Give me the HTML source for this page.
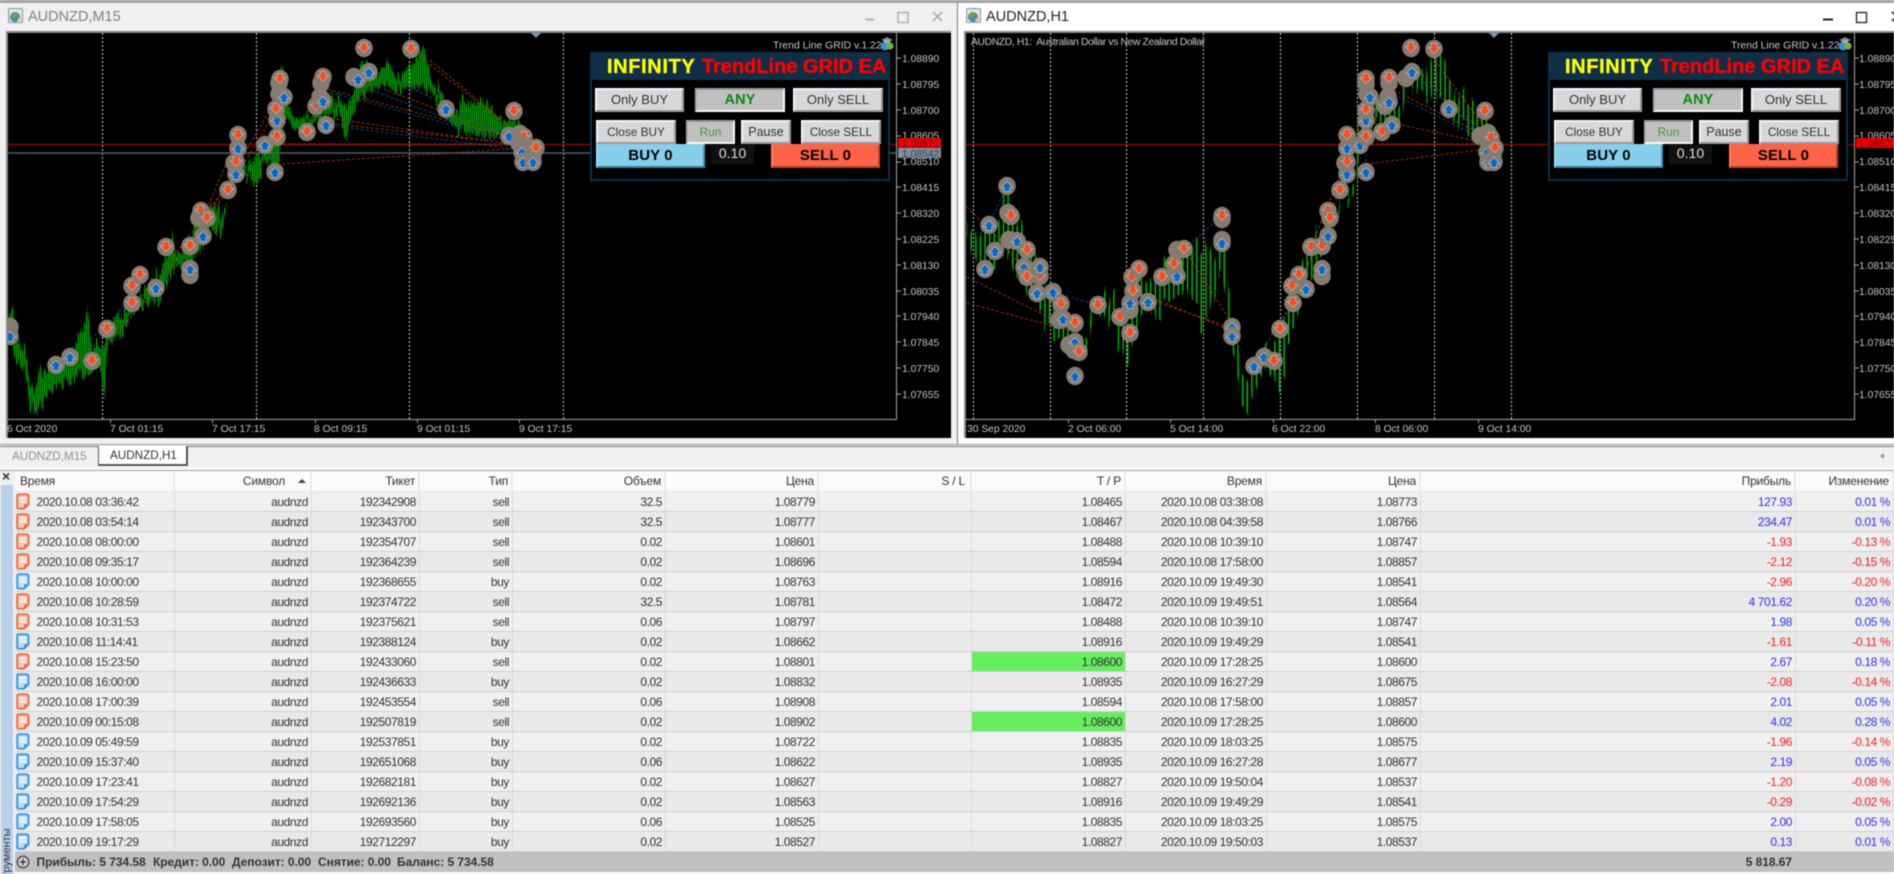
<!DOCTYPE html>
<html><head><meta charset="utf-8"><title>AUDNZD</title>
<style>
html,body{margin:0;padding:0;width:1894px;height:874px;overflow:hidden;background:#f0f0f0;font-family:"Liberation Sans",sans-serif}
#w{position:absolute;left:0;top:0;width:1894px;height:874px;overflow:hidden;background:#f0f0f0;filter:blur(.4px)}
.abs,.b,.p{position:absolute}
svg text{font-family:"Liberation Sans",sans-serif}
.p{top:52px;width:300px;height:129px;background:#0f2f47}
.in{position:absolute;left:2px;top:28px;width:296px;height:99px;background:#000}
.ti{position:absolute;left:17px;top:3px;font-weight:bold;font-size:20px;white-space:nowrap;line-height:24px;-webkit-text-stroke:.35px}
.ti .y{color:#ff0;letter-spacing:.62px}
.ti .r{color:#f00;margin-left:1px}
.b{box-sizing:border-box;text-align:center;background:#d8d8d8;color:#333;border:2px solid;border-color:#f4f4f4 #999 #999 #f4f4f4;white-space:nowrap;line-height:20px;font-size:13px}
.b.s{font-size:11.8px}
.b.d{background:#c0c0c0;border-color:#999 #f8f8f8 #f8f8f8 #aaa}
.big{font-weight:bold;font-size:15px;color:#000;letter-spacing:.1px}
table{position:absolute;left:15px;top:471px;width:1879px;table-layout:fixed;border-collapse:separate;border-spacing:0;font-size:12px;letter-spacing:-.42px;color:#333}
td,th{box-sizing:border-box;height:20px;padding:0 3px 0 0;text-align:right;border-right:1px solid #d8d8d8;border-bottom:1px solid #cfcfcf;white-space:nowrap;overflow:hidden;font-weight:normal;line-height:18px;position:relative}
th{height:21px;background:#fbfbfb;border-right:2px solid #ececec;border-bottom:1px solid #e4e4e4;letter-spacing:-.2px}
tr:nth-child(even) td{background:#e9e9e9}
td.a{text-align:left;padding-left:21.5px}
td.g{background:#66ee5f!important}
td svg{position:absolute;left:1px;top:1px;width:14px;height:17px}
.u{color:#3030f5}.n{color:#f52020}
.ft{position:absolute;top:852px;font-size:12px;font-weight:bold;color:#333;line-height:20px;white-space:nowrap;letter-spacing:-.05px}
</style></head><body><div id="w">

<!-- window chrome -->
<div class="abs" style="left:0;top:0;width:1894px;height:3px;background:#a2a2a2"></div>
<div class="abs" style="left:0;top:3px;width:957px;height:441px;background:#f0f0f0"></div>
<div class="abs" style="left:957px;top:3px;width:1px;height:441px;background:#777"></div>
<div class="abs" style="left:958px;top:3px;width:936px;height:441px;background:#fff"></div>
<div class="abs" style="left:28px;top:6px;font-size:14.5px;line-height:22px;color:#808080">AUDNZD,M15</div>
<div class="abs" style="left:986px;top:6px;font-size:14.5px;line-height:22px;color:#222">AUDNZD,H1</div>

<!-- black chart areas -->
<div class="abs" style="left:6px;top:31px;width:945px;height:407px;background:#000;border:solid #8a8a8a;border-width:2px 0 0 2px;box-sizing:border-box"></div>
<div class="abs" style="left:964px;top:31px;width:930px;height:407px;background:#000;border:solid #8a8a8a;border-width:2px 0 0 2px;box-sizing:border-box"></div>

<svg class="abs" style="left:0;top:0" width="1894" height="874" viewBox="0 0 1894 874">
<defs>
<pattern id="p1" width="2" height="10" patternUnits="userSpaceOnUse"><rect width="1.3" height="10" fill="#00b000"/></pattern>
<pattern id="p2" width="4.6" height="10" patternUnits="userSpaceOnUse"><rect width="1.4" height="10" fill="#00c400"/></pattern>
<filter id="j1" x="0" y="30" width="900" height="400" filterUnits="userSpaceOnUse" color-interpolation-filters="sRGB"><feTurbulence type="fractalNoise" baseFrequency="0.45 0.0005" numOctaves="2" seed="3" result="n"/><feColorMatrix in="n" type="matrix" values="0 0 0 0 .5  0 1.8 0 0 -.4  0 0 0 0 0  0 0 0 0 1" result="m"/><feDisplacementMap in="SourceGraphic" in2="m" scale="20" xChannelSelector="R" yChannelSelector="G"/></filter>
<filter id="j2" x="960" y="30" width="900" height="400" filterUnits="userSpaceOnUse" color-interpolation-filters="sRGB"><feTurbulence type="fractalNoise" baseFrequency="0.3 0.0005" numOctaves="2" seed="8" result="n"/><feColorMatrix in="n" type="matrix" values="0 0 0 0 .5  0 1.8 0 0 -.4  0 0 0 0 0  0 0 0 0 1" result="m"/><feDisplacementMap in="SourceGraphic" in2="m" scale="30" xChannelSelector="R" yChannelSelector="G"/></filter>
<clipPath id="c1"><rect x="8" y="33" width="888" height="386"/></clipPath>
<clipPath id="c2"><rect x="966" y="33" width="888" height="386"/></clipPath>
<g id="D"><ellipse rx="8.8" ry="9.2" fill="#867b71"/><path d="M-2.8-5.4H2.8V-1.5H5.8L0 4.6-5.800-1.500H-2.800Z" fill="#f24c22" stroke="#d9c4b8" stroke-width=".6"/></g>
<g id="U"><ellipse rx="8.8" ry="9.2" fill="#867b71"/><path d="M-2.8 5.4H2.8V1.500H5.800L0-4.600-5.800 1.500H-2.800Z" fill="#0a68c4" stroke="#c8d4de" stroke-width=".6"/></g>
<g id="G"><ellipse rx="8.8" ry="9.2" fill="#867b71"/></g>
<g id="ic"><rect x=".5" y=".5" width="14" height="14" rx="1" fill="#dfe6e8" stroke="#8a9498"/><circle cx="7" cy="9" r="5" fill="#3d86c6"/><path d="M3 7l4-3 3 2-2 3-3 3z" fill="#6aa83c"/><path d="M9 11l3-2 1 3-3 1z" fill="#e0c040"/></g>
<g id="hat"><circle cx="6" cy="11" r="4.5" fill="#3d8ed0"/><circle cx="11" cy="11" r="3.6" fill="#6fb83c"/><path d="M2 5L8 2l6 3-6 3z" fill="#7a8a90"/><rect x="5" y="5" width="6" height="3" fill="#a8b0b4"/></g>
<symbol id="rd" viewBox="0 0 14 17"><path d="M1.200 2.500a1.200 1.200 0 0 1 1.200-1.200h8.400a1.700 1.700 0 0 1 1.700 1.700v8.500L8 15.700H2.400a1.200 1.200 0 0 1-1.200-1.200z" fill="#fbc9b8" stroke="#ee6a44" stroke-width="1.900"/><path d="M3.500 5.200h6.500M3.500 8.400h6.500" stroke="#fff" stroke-width="1.400"/><path d="M8 15.700v-4.500h4.500z" fill="#ee6a44"/></symbol>
<symbol id="bl" viewBox="0 0 14 17"><path d="M1.200 2.500a1.200 1.200 0 0 1 1.200-1.200h8.400a1.700 1.700 0 0 1 1.700 1.700v8.500L8 15.700H2.400a1.200 1.200 0 0 1-1.200-1.200z" fill="#bfe0f8" stroke="#3b96de" stroke-width="1.900"/><path d="M3.500 5.200h6.500M3.500 8.400h6.500" stroke="#fff" stroke-width="1.400"/><path d="M8 15.700v-4.500h4.500z" fill="#3b96de"/></symbol>
</defs>

<!-- title icons / window controls -->
<use href="#ic" x="8" y="8"/><use href="#ic" x="966" y="8"/>
<path d="M865 19.500h9" stroke="#b0b0b0" stroke-width="2"/><rect x="898" y="12.500" width="10" height="10" fill="none" stroke="#b0b0b0" stroke-width="1.500"/><path d="M933 12l9 9M942 12l-9 9" stroke="#b0b0b0" stroke-width="1.800"/>
<path d="M1823 19.500h10" stroke="#222" stroke-width="2"/><rect x="1856.500" y="12.500" width="10" height="10" fill="none" stroke="#222" stroke-width="1.300"/><path d="M1892 12l9 9M1901 12l-9 9" stroke="#222" stroke-width="1.800"/>

<!-- CHART 1 -->
<g clip-path="url(#c1)">
<path d="M102.500 33V419M256.500 33V419M409.500 33V419M563.500 33V419" stroke="#d4d4d4" stroke-dasharray="2 2"/>
<polygon fill="url(#p1)" filter="url(#j1)" points="8,316 13,306 17,340 25,352 28,375 33,395 40,372 50,375 60,365 70,355 80,338 88,308 92,350 103,345 110,325 125,312 140,298 150,282 163,270 172,233 176,255 190,240 200,215 215,205 222,215 228,195 240,160 250,165 255,155 265,155 275,130 282,61 287,105 295,118 310,118 325,95 333,98 345,105 352,100 358,70 365,60 375,78 388,62 398,80 410,65 425,48 432,85 440,90 455,115 462,100 475,105 480,100 490,105 500,120 518,120 530,140 530,150 515,140 500,135 478,135 475,135 455,128 440,105 430,90 412,85 398,92 385,85 370,90 358,100 345,140 340,115 325,115 310,125 295,130 285,115 278,170 265,160 258,185 245,172 232,165 222,232 210,230 195,260 175,265 160,300 150,302 135,310 118,340 108,345 104,397 100,365 90,372 70,380 60,385 45,400 38,412 30,410 24,370 16,360 8,330"/>
<path d="M8 144.500H896" stroke="#8b0000" stroke-width="1.500"/><path d="M8 153H896" stroke="#4c5c68" stroke-width="1.500"/>
<g fill="none" stroke-width="1" stroke-dasharray="3 2" opacity=".85">
<path stroke="#b03818" d="M282 164L525 148M283 144L525 144M360 80L525 143M323 88L525 141M430 60L525 140M326 123L525 145M307 115L525 146M107 345L190 250L238 135M168 272L228 190L277 109M140 300L236 174M197 235L270 110M418 55L500 120"/>
<path stroke="#1050a0" d="M380 72L525 145M330 92L525 145M358 85L525 148M60 365L107 325L140 290M156 288L203 236M326 125L525 150M446 105L525 145"/>
</g>
<g>
<use href="#G" x="10" y="327"/><use href="#U" x="10" y="336"/><use href="#U" x="56" y="365"/><use href="#U" x="70" y="357"/><use href="#D" x="92" y="361"/><use href="#D" x="107" y="329"/><use href="#D" x="132" y="303"/><use href="#D" x="132" y="286"/><use href="#D" x="140" y="275"/><use href="#U" x="156" y="288"/><use href="#D" x="166" y="247"/><use href="#G" x="190" y="275"/><use href="#U" x="190" y="269"/><use href="#D" x="190" y="246"/><use href="#U" x="203" y="236"/><use href="#G" x="199" y="218"/><use href="#D" x="201" y="211"/><use href="#D" x="207" y="218"/><use href="#D" x="228" y="190"/><use href="#U" x="236" y="174"/><use href="#G" x="234" y="163"/><use href="#D" x="236" y="162"/><use href="#U" x="238" y="148"/><use href="#D" x="238" y="135"/><use href="#U" x="265" y="145"/><use href="#U" x="277" y="120"/><use href="#D" x="277" y="137"/><use href="#D" x="276" y="109"/><use href="#U" x="275" y="172"/><use href="#G" x="279" y="94"/><use href="#U" x="284" y="97"/><use href="#G" x="279" y="83"/><use href="#D" x="280" y="79"/><use href="#D" x="307" y="132"/><use href="#U" x="326" y="125"/><use href="#D" x="316" y="106"/><use href="#G" x="320" y="97"/><use href="#U" x="323" y="101"/><use href="#G" x="321" y="83"/><use href="#D" x="323" y="77"/><use href="#G" x="354" y="77"/><use href="#U" x="358" y="79"/><use href="#U" x="369" y="72"/><use href="#D" x="364" y="48"/><use href="#D" x="411" y="49"/><use href="#U" x="446" y="109"/><use href="#D" x="514" y="111"/><use href="#U" x="509" y="136"/><use href="#G" x="520" y="134"/><use href="#D" x="524" y="137"/><use href="#G" x="519" y="143"/><use href="#U" x="522" y="152"/><use href="#G" x="533" y="155"/><use href="#D" x="536" y="148"/><use href="#U" x="523" y="162"/><use href="#U" x="533" y="162"/>
</g>
<path d="M531 33h10l-5 5z" fill="#7a96aa"/>
</g>
<path d="M896.500 33V419.500H8" fill="none" stroke="#a8a8a8"/>
<path d="M896 58h5M896 84h5M896 110h5M896 136h5M896 162h5M896 187h5M896 213h5M896 239h5M896 265h5M896 291h5M896 316h5M896 342h5M896 368h5M896 394h5M110.500 419v4M212.500 419v4M315.500 419v4M417.500 419v4M519.500 419v4" stroke="#a8a8a8" fill="none"/>
<g fill="#c4c4c4" font-size="10.300">
<text x="902" y="62">1.08890</text><text x="902" y="88">1.08795</text><text x="902" y="114">1.08700</text><text x="902" y="139">1.08605</text><text x="902" y="165">1.08510</text><text x="902" y="191">1.08415</text><text x="902" y="217">1.08320</text><text x="902" y="243">1.08225</text><text x="902" y="269">1.08130</text><text x="902" y="295">1.08035</text><text x="902" y="320">1.07940</text><text x="902" y="346">1.07845</text><text x="902" y="372">1.07750</text><text x="902" y="398">1.07655</text>
<text x="7" y="432">6 Oct 2020</text><text x="110" y="432">7 Oct 01:15</text><text x="212" y="432">7 Oct 17:15</text><text x="314" y="432">8 Oct 09:15</text><text x="417" y="432">9 Oct 01:15</text><text x="519" y="432">9 Oct 17:15</text>
</g>
<rect x="898" y="138" width="43" height="10" fill="#f00000"/><rect x="898" y="148" width="43" height="10" fill="#7e909c"/>
<text x="902" y="147" font-size="10.300" fill="#700000">1.08572</text><text x="902" y="157" font-size="10.300" fill="#33424d">1.08542</text>
<text x="773" y="48.500" font-size="10.400" fill="#c8c8c8">Trend Line GRID v.1.22</text><use href="#hat" x="879" y="35"/>

<!-- CHART 2 -->
<g clip-path="url(#c2)">
<path d="M973.500 33V419M1050.500 33V419M1126.500 33V419M1203.500 33V419M1280.500 33V419M1357.500 33V419M1434.500 33V419M1511.500 33V419" stroke="#d4d4d4" stroke-dasharray="2 2"/>
<polygon fill="url(#p2)" filter="url(#j2)" points="967,225 975,235 985,225 1000,220 1005,173 1012,205 1020,225 1035,255 1050,290 1062,305 1075,340 1088,330 1098,300 1105,290 1120,310 1130,320 1140,280 1150,285 1160,275 1175,255 1190,245 1203,240 1215,250 1225,250 1230,300 1237,350 1242,380 1252,375 1262,355 1275,340 1285,310 1295,295 1312,230 1325,225 1335,205 1355,180 1358,130 1368,100 1370,62 1378,110 1400,105 1405,70 1420,75 1435,55 1445,60 1452,90 1470,98 1490,120 1495,135 1495,145 1475,135 1450,115 1440,100 1425,95 1408,85 1400,125 1390,130 1375,120 1360,150 1357,190 1340,205 1330,235 1312,270 1300,300 1290,340 1280,395 1272,370 1262,380 1248,410 1240,412 1235,360 1228,320 1222,270 1203,325 1190,290 1170,300 1158,325 1145,310 1127,360 1110,320 1095,310 1090,345 1078,355 1060,345 1040,310 1020,275 1005,255 990,260 975,260 967,240"/>
<path d="M966 144.500H1854" stroke="#8b0000" stroke-width="1.500"/>
<g fill="none" stroke-width="1" stroke-dasharray="3 2" opacity=".85">
<path stroke="#b03818" d="M967 207L1000 240L1040 290L1075 325M967 277L1075 330M967 303L1075 332M1366 164L1495 148M1366 144L1495 144M1411 65L1495 143M1389 88L1495 141M1434 60L1495 140M1392 123L1495 145M1139 269L1120 317M1184 249L1230 320M1133 290L1230 330M1222 216L1222 243M1150 300L1232 328M1280 329L1340 190M1311 247L1366 110"/>
<path stroke="#1050a0" d="M1412 72L1495 145M1389 92L1495 145M1053 292L1075 340M1017 241L1040 267M1007 186L989 225M1254 366L1280 320L1293 303M1184 249L1222 216M1098 305L1053 292M1366 79L1366 172M1449 105L1495 145"/>
</g>
<g>
<use href="#U" x="1007" y="186"/><use href="#U" x="989" y="225"/><use href="#U" x="995" y="251"/><use href="#U" x="985" y="269"/><use href="#G" x="1008" y="213"/><use href="#D" x="1011" y="216"/><use href="#G" x="1009" y="240"/><use href="#U" x="1017" y="241"/><use href="#D" x="1027" y="250"/><use href="#U" x="1024" y="267"/><use href="#D" x="1040" y="276"/><use href="#U" x="1040" y="267"/><use href="#D" x="1027" y="277"/><use href="#U" x="1037" y="293"/><use href="#U" x="1053" y="292"/><use href="#G" x="1059" y="320"/><use href="#D" x="1061" y="304"/><use href="#U" x="1063" y="319"/><use href="#D" x="1075" y="323"/><use href="#G" x="1069" y="345"/><use href="#G" x="1074" y="350"/><use href="#U" x="1075" y="342"/><use href="#D" x="1079" y="352"/><use href="#U" x="1075" y="376"/><use href="#D" x="1098" y="305"/><use href="#D" x="1120" y="317"/><use href="#D" x="1130" y="333"/><use href="#G" x="1130" y="310"/><use href="#U" x="1130" y="303"/><use href="#D" x="1133" y="291"/><use href="#D" x="1132" y="277"/><use href="#D" x="1139" y="269"/><use href="#U" x="1148" y="302"/><use href="#D" x="1162" y="277"/><use href="#U" x="1177" y="276"/><use href="#D" x="1174" y="264"/><use href="#G" x="1177" y="250"/><use href="#D" x="1184" y="249"/><use href="#G" x="1222" y="219"/><use href="#D" x="1222" y="216"/><use href="#G" x="1222" y="240"/><use href="#U" x="1222" y="243"/><use href="#U" x="1232" y="327"/><use href="#U" x="1232" y="336"/><use href="#U" x="1254" y="366"/><use href="#U" x="1264" y="357"/><use href="#D" x="1274" y="361"/><use href="#D" x="1280" y="329"/><use href="#D" x="1293" y="303"/><use href="#D" x="1292" y="286"/><use href="#D" x="1299" y="275"/><use href="#U" x="1306" y="289"/><use href="#D" x="1311" y="247"/><use href="#G" x="1322" y="276"/><use href="#U" x="1322" y="269"/><use href="#D" x="1322" y="246"/><use href="#U" x="1328" y="236"/><use href="#D" x="1328" y="211"/><use href="#D" x="1330" y="218"/><use href="#D" x="1340" y="190"/><use href="#U" x="1347" y="174"/><use href="#G" x="1345" y="163"/><use href="#D" x="1347" y="162"/><use href="#U" x="1347" y="148"/><use href="#D" x="1347" y="135"/><use href="#U" x="1360" y="145"/><use href="#U" x="1366" y="120"/><use href="#D" x="1366" y="137"/><use href="#D" x="1366" y="110"/><use href="#U" x="1366" y="172"/><use href="#G" x="1367" y="94"/><use href="#U" x="1370" y="97"/><use href="#G" x="1366" y="84"/><use href="#D" x="1366" y="79"/><use href="#D" x="1382" y="132"/><use href="#U" x="1392" y="125"/><use href="#D" x="1385" y="106"/><use href="#G" x="1388" y="97"/><use href="#U" x="1389" y="102"/><use href="#G" x="1389" y="83"/><use href="#D" x="1389" y="78"/><use href="#G" x="1406" y="78"/><use href="#U" x="1412" y="72"/><use href="#D" x="1411" y="48"/><use href="#D" x="1434" y="49"/><use href="#U" x="1449" y="109"/><use href="#D" x="1485" y="111"/><use href="#G" x="1480" y="136"/><use href="#G" x="1488" y="133"/><use href="#D" x="1491" y="138"/><use href="#G" x="1493" y="155"/><use href="#U" x="1487" y="152"/><use href="#D" x="1495" y="148"/><use href="#U" x="1488" y="162"/><use href="#U" x="1494" y="162"/>
</g>
<path d="M1489 33h10l-5 5z" fill="#7a96aa"/>
</g>
<path d="M1854.500 33V419.500H966" fill="none" stroke="#a8a8a8"/>
<path d="M1854 58h5M1854 84h5M1854 110h5M1854 136h5M1854 162h5M1854 187h5M1854 213h5M1854 239h5M1854 265h5M1854 291h5M1854 316h5M1854 342h5M1854 368h5M1854 394h5M1068.500 419v4M1170.500 419v4M1273.500 419v4M1375.500 419v4M1478.500 419v4" stroke="#a8a8a8" fill="none"/>
<g fill="#c4c4c4" font-size="10.300">
<text x="1859" y="62">1.08890</text><text x="1859" y="88">1.08795</text><text x="1859" y="114">1.08700</text><text x="1859" y="139">1.08605</text><text x="1859" y="165">1.08510</text><text x="1859" y="191">1.08415</text><text x="1859" y="217">1.08320</text><text x="1859" y="243">1.08225</text><text x="1859" y="269">1.08130</text><text x="1859" y="295">1.08035</text><text x="1859" y="320">1.07940</text><text x="1859" y="346">1.07845</text><text x="1859" y="372">1.07750</text><text x="1859" y="398">1.07655</text>
<text x="967" y="432">30 Sep 2020</text><text x="1068" y="432">2 Oct 06:00</text><text x="1170" y="432">5 Oct 14:00</text><text x="1272" y="432">6 Oct 22:00</text><text x="1375" y="432">8 Oct 06:00</text><text x="1478" y="432">9 Oct 14:00</text>
</g>
<rect x="1856" y="138" width="38" height="10" fill="#f00000"/><text x="1859" y="147" font-size="10.300" fill="#700000">1.08572</text>
<text x="971" y="45" font-size="10.300" letter-spacing="-.35" fill="#c8c8c8" xml:space="preserve">AUDNZD, H1:  Australian Dollar vs New Zealand Dollar</text>
<text x="1731" y="48.500" font-size="10.400" fill="#c8c8c8">Trend Line GRID v.1.22</text><use href="#hat" x="1837" y="35"/>
</svg>

<!-- EA panel 1 -->
<div class="p" style="left:590px">
<div class="in"></div>
<div class="ti"><span class="y">INFINITY</span> <span class="r">TrendLine GRID EA</span></div>
<div class="b" style="left:5px;top:36px;width:89px;height:24px">Only BUY</div>
<div class="b d big" style="left:105px;top:36px;width:90px;height:24px;color:#0a8a0a;font-size:14.500px">ANY</div>
<div class="b" style="left:203px;top:36px;width:90px;height:24px">Only SELL</div>
<div class="b s" style="left:6px;top:68px;width:80px;height:24px">Close BUY</div>
<div class="b s d" style="left:96px;top:68px;width:49px;height:24px;color:#3a9a3a">Run</div>
<div class="b" style="left:151px;top:68px;width:50px;height:24px;font-size:12.500px">Pause</div>
<div class="b s" style="left:211px;top:68px;width:80px;height:24px">Close SELL</div>
<div class="b big" style="left:6px;top:92px;width:109px;height:24px;background:#87ceeb;border-color:#87ceeb #4a90b8 #3a7ea6 #9edcf4">BUY 0</div>
<div class="abs" style="left:121px;top:93px;width:43px;height:19px;background:#111;color:#ddd;font-size:14.200px;line-height:19px;text-align:center">0.10</div>
<div class="b big" style="left:181px;top:92px;width:109px;height:24px;background:#ff6347;border-color:#ff6347 #c0452c #b33e26 #ff7a60">SELL 0</div>
</div>

<!-- EA panel 2 -->
<div class="p" style="left:1548px">
<div class="in"></div>
<div class="ti"><span class="y">INFINITY</span> <span class="r">TrendLine GRID EA</span></div>
<div class="b" style="left:5px;top:36px;width:89px;height:24px">Only BUY</div>
<div class="b d big" style="left:105px;top:36px;width:90px;height:24px;color:#0a8a0a;font-size:14.500px">ANY</div>
<div class="b" style="left:203px;top:36px;width:90px;height:24px">Only SELL</div>
<div class="b s" style="left:6px;top:68px;width:80px;height:24px">Close BUY</div>
<div class="b s d" style="left:96px;top:68px;width:49px;height:24px;color:#3a9a3a">Run</div>
<div class="b" style="left:151px;top:68px;width:50px;height:24px;font-size:12.500px">Pause</div>
<div class="b s" style="left:211px;top:68px;width:80px;height:24px">Close SELL</div>
<div class="b big" style="left:6px;top:92px;width:109px;height:24px;background:#87ceeb;border-color:#87ceeb #4a90b8 #3a7ea6 #9edcf4">BUY 0</div>
<div class="abs" style="left:121px;top:93px;width:43px;height:19px;background:#111;color:#ddd;font-size:14.200px;line-height:19px;text-align:center">0.10</div>
<div class="b big" style="left:181px;top:92px;width:109px;height:24px;background:#ff6347;border-color:#ff6347 #c0452c #b33e26 #ff7a60">SELL 0</div>
</div>

<!-- tab bar -->
<div class="abs" style="left:0;top:444px;width:1894px;height:3px;background:#f0f0f0;border-top:1px solid #999;border-bottom:1px solid #777;box-sizing:border-box"></div>
<div class="abs" style="left:0;top:447px;width:1894px;height:19px;background:#f0f0f0"></div>
<div class="abs" style="left:12px;top:448px;font-size:11.700px;line-height:18px;color:#909090">AUDNZD,M15</div>
<div class="abs" style="left:98px;top:446px;width:90px;height:20px;box-sizing:border-box;background:#fff;border:1px solid #555;border-top:0;border-right-width:2px;border-bottom-width:2px;font-size:11.700px;line-height:20px;color:#333;padding-left:11px">AUDNZD,H1</div>
<div class="abs" style="left:0;top:466px;width:1894px;height:4px;background:#f6f6f6"></div>
<div class="abs" style="left:0;top:470px;width:1894px;height:1px;background:#aaa"></div>
<div class="abs" style="left:1880px;top:453px;width:0;height:0;border:3.500px solid transparent;border-right:4px solid #999;border-left:0"></div>

<!-- left strip -->
<div class="abs" style="left:0;top:471px;width:15px;height:403px;background:#f0f0f0"></div>
<div class="abs" style="left:1px;top:485px;width:12px;height:389px;background:#b8d0e8"></div>
<div class="abs" style="left:2px;top:468px;font-size:14px;line-height:16px;font-weight:bold;color:#333">×</div>
<div class="abs" style="left:1px;top:828px;height:46px;width:12px;overflow:hidden"><div style="position:absolute;left:0;top:0;height:70px;width:12px;font-size:11px;line-height:12px;color:#333;writing-mode:vertical-rl;transform:rotate(180deg);text-align:right;white-space:nowrap">Инструменты</div></div>

<table>
<colgroup><col style="width:160px"><col style="width:137px"><col style="width:108px"><col style="width:93px"><col style="width:153px"><col style="width:153px"><col style="width:153px"><col style="width:154px"><col style="width:141px"><col style="width:154px"><col style="width:375px"><col style="width:98px"></colgroup>
<thead><tr><th style="text-align:left;padding-left:5px">Время</th><th style="padding-right:25px">Символ<svg style="position:absolute;left:123px;top:8px;width:8px;height:4px"><path d="M0 4L4 0l4 4z" fill="#444"/></svg></th><th>Тикет</th><th>Тип</th><th>Объем</th><th>Цена</th><th style="padding-right:5px">S / L</th><th>T / P</th><th>Время</th><th>Цена</th><th>Прибыль</th><th>Изменение</th></tr></thead>
<tbody>
<tr><td class="a"><svg><use href="#rd"/></svg>2020.10.08 03:36:42</td><td>audnzd</td><td>192342908</td><td>sell</td><td>32.5</td><td>1.08779</td><td></td><td>1.08465</td><td>2020.10.08 03:38:08</td><td>1.08773</td><td class="u">127.93</td><td class="u">0.01 %</td></tr>
<tr><td class="a"><svg><use href="#rd"/></svg>2020.10.08 03:54:14</td><td>audnzd</td><td>192343700</td><td>sell</td><td>32.5</td><td>1.08777</td><td></td><td>1.08467</td><td>2020.10.08 04:39:58</td><td>1.08766</td><td class="u">234.47</td><td class="u">0.01 %</td></tr>
<tr><td class="a"><svg><use href="#rd"/></svg>2020.10.08 08:00:00</td><td>audnzd</td><td>192354707</td><td>sell</td><td>0.02</td><td>1.08601</td><td></td><td>1.08488</td><td>2020.10.08 10:39:10</td><td>1.08747</td><td class="n">-1.93</td><td class="n">-0.13 %</td></tr>
<tr><td class="a"><svg><use href="#rd"/></svg>2020.10.08 09:35:17</td><td>audnzd</td><td>192364239</td><td>sell</td><td>0.02</td><td>1.08696</td><td></td><td>1.08594</td><td>2020.10.08 17:58:00</td><td>1.08857</td><td class="n">-2.12</td><td class="n">-0.15 %</td></tr>
<tr><td class="a"><svg><use href="#bl"/></svg>2020.10.08 10:00:00</td><td>audnzd</td><td>192368655</td><td>buy</td><td>0.02</td><td>1.08763</td><td></td><td>1.08916</td><td>2020.10.09 19:49:30</td><td>1.08541</td><td class="n">-2.96</td><td class="n">-0.20 %</td></tr>
<tr><td class="a"><svg><use href="#rd"/></svg>2020.10.08 10:28:59</td><td>audnzd</td><td>192374722</td><td>sell</td><td>32.5</td><td>1.08781</td><td></td><td>1.08472</td><td>2020.10.09 19:49:51</td><td>1.08564</td><td class="u">4 701.62</td><td class="u">0.20 %</td></tr>
<tr><td class="a"><svg><use href="#rd"/></svg>2020.10.08 10:31:53</td><td>audnzd</td><td>192375621</td><td>sell</td><td>0.06</td><td>1.08797</td><td></td><td>1.08488</td><td>2020.10.08 10:39:10</td><td>1.08747</td><td class="u">1.98</td><td class="u">0.05 %</td></tr>
<tr><td class="a"><svg><use href="#bl"/></svg>2020.10.08 11:14:41</td><td>audnzd</td><td>192388124</td><td>buy</td><td>0.02</td><td>1.08662</td><td></td><td>1.08916</td><td>2020.10.09 19:49:29</td><td>1.08541</td><td class="n">-1.61</td><td class="n">-0.11 %</td></tr>
<tr><td class="a"><svg><use href="#rd"/></svg>2020.10.08 15:23:50</td><td>audnzd</td><td>192433060</td><td>sell</td><td>0.02</td><td>1.08801</td><td></td><td class="g">1.08600</td><td>2020.10.09 17:28:25</td><td>1.08600</td><td class="u">2.67</td><td class="u">0.18 %</td></tr>
<tr><td class="a"><svg><use href="#bl"/></svg>2020.10.08 16:00:00</td><td>audnzd</td><td>192436633</td><td>buy</td><td>0.02</td><td>1.08832</td><td></td><td>1.08935</td><td>2020.10.09 16:27:29</td><td>1.08675</td><td class="n">-2.08</td><td class="n">-0.14 %</td></tr>
<tr><td class="a"><svg><use href="#rd"/></svg>2020.10.08 17:00:39</td><td>audnzd</td><td>192453554</td><td>sell</td><td>0.06</td><td>1.08908</td><td></td><td>1.08594</td><td>2020.10.08 17:58:00</td><td>1.08857</td><td class="u">2.01</td><td class="u">0.05 %</td></tr>
<tr><td class="a"><svg><use href="#rd"/></svg>2020.10.09 00:15:08</td><td>audnzd</td><td>192507819</td><td>sell</td><td>0.02</td><td>1.08902</td><td></td><td class="g">1.08600</td><td>2020.10.09 17:28:25</td><td>1.08600</td><td class="u">4.02</td><td class="u">0.28 %</td></tr>
<tr><td class="a"><svg><use href="#bl"/></svg>2020.10.09 05:49:59</td><td>audnzd</td><td>192537851</td><td>buy</td><td>0.02</td><td>1.08722</td><td></td><td>1.08835</td><td>2020.10.09 18:03:25</td><td>1.08575</td><td class="n">-1.96</td><td class="n">-0.14 %</td></tr>
<tr><td class="a"><svg><use href="#bl"/></svg>2020.10.09 15:37:40</td><td>audnzd</td><td>192651068</td><td>buy</td><td>0.06</td><td>1.08622</td><td></td><td>1.08935</td><td>2020.10.09 16:27:28</td><td>1.08677</td><td class="u">2.19</td><td class="u">0.05 %</td></tr>
<tr><td class="a"><svg><use href="#bl"/></svg>2020.10.09 17:23:41</td><td>audnzd</td><td>192682181</td><td>buy</td><td>0.02</td><td>1.08627</td><td></td><td>1.08827</td><td>2020.10.09 19:50:04</td><td>1.08537</td><td class="n">-1.20</td><td class="n">-0.08 %</td></tr>
<tr><td class="a"><svg><use href="#bl"/></svg>2020.10.09 17:54:29</td><td>audnzd</td><td>192692136</td><td>buy</td><td>0.02</td><td>1.08563</td><td></td><td>1.08916</td><td>2020.10.09 19:49:29</td><td>1.08541</td><td class="n">-0.29</td><td class="n">-0.02 %</td></tr>
<tr><td class="a"><svg><use href="#bl"/></svg>2020.10.09 17:58:05</td><td>audnzd</td><td>192693560</td><td>buy</td><td>0.06</td><td>1.08525</td><td></td><td>1.08835</td><td>2020.10.09 18:03:25</td><td>1.08575</td><td class="u">2.00</td><td class="u">0.05 %</td></tr>
<tr><td class="a"><svg><use href="#bl"/></svg>2020.10.09 19:17:29</td><td>audnzd</td><td>192712297</td><td>buy</td><td>0.02</td><td>1.08527</td><td></td><td>1.08827</td><td>2020.10.09 19:50:03</td><td>1.08537</td><td class="u">0.13</td><td class="u">0.01 %</td></tr>
</tbody></table>

<!-- footer -->
<div class="abs" style="left:15px;top:852px;width:1879px;height:20px;background:#c0c0c0"></div>
<div class="abs" style="left:15px;top:872px;width:1879px;height:2px;background:#fff"></div>
<svg class="abs" style="left:16px;top:855px" width="14" height="14"><circle cx="7" cy="7" r="5.700" fill="#d0d0d0" stroke="#444" stroke-width="1.300"/><path d="M4 7h6M7 4v6" stroke="#333" stroke-width="1.300"/></svg>
<div class="ft" style="left:36.500px">Прибыль: 5 734.58</div>
<div class="ft" style="left:153px">Кредит: 0.00</div>
<div class="ft" style="left:232px">Депозит: 0.00</div>
<div class="ft" style="left:318px">Снятие: 0.00</div>
<div class="ft" style="left:397px">Баланс: 5 734.58</div>
<div class="ft" style="right:102px">5 818.67</div>
</div></body></html>
